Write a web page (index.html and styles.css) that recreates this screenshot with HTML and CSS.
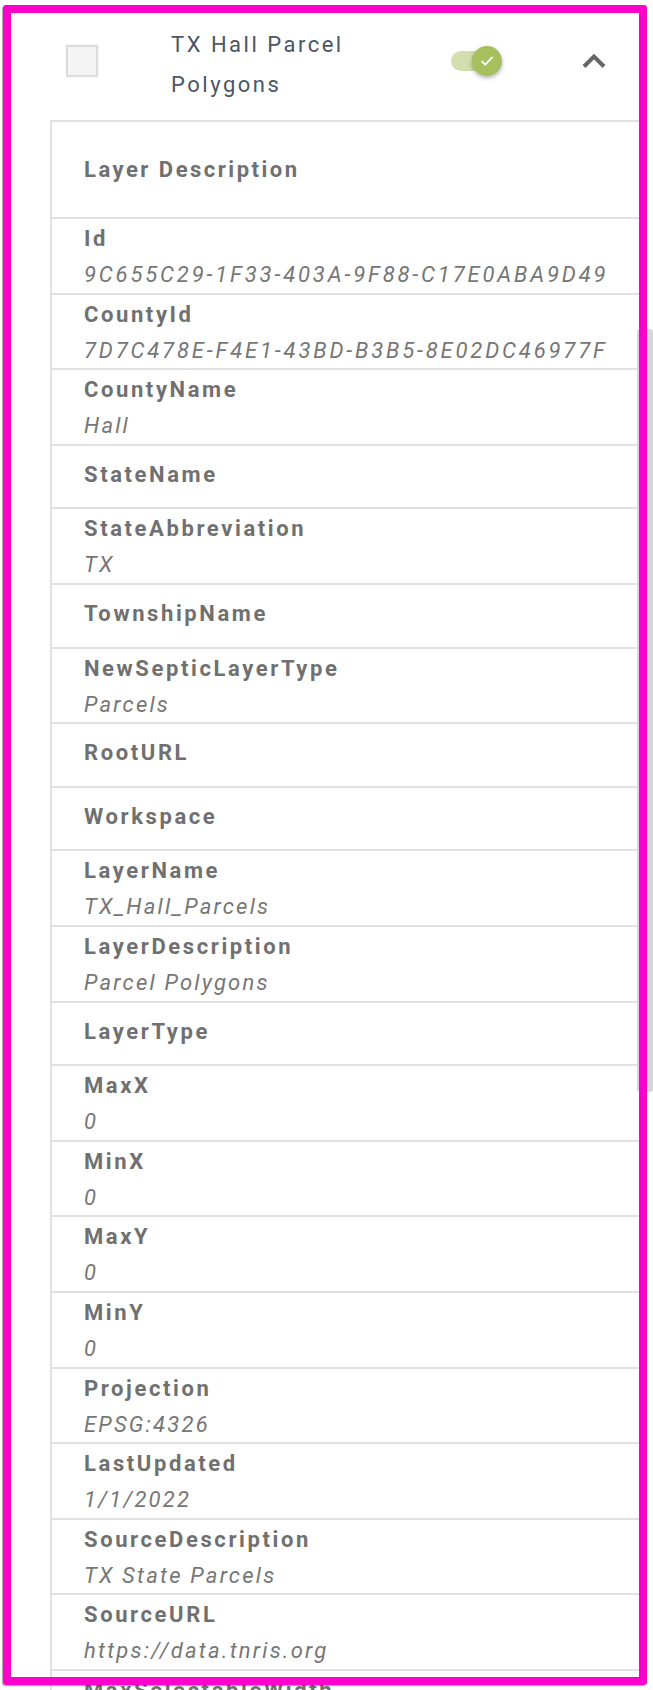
FILE: index.html
```html
<!DOCTYPE html>
<html lang="en">
<head>
	<meta charset="UTF-8">
	<meta name="viewport" content="width=device-width, initial-scale=1.0">
	<title>TX Hall Parcel Polygons</title>
	<link rel="stylesheet" href="styles.css">
</head>
<body>
	<div class="layer">
		<div class="layer-head">
			<span class="check"></span>
			<div class="layer-title">TX Hall Parcel Polygons</div>
			<div class="toggle">
				<span class="track"></span>
				<span class="knob">
					<svg width="14" height="12" viewBox="0 0 14 12"><path d="M2 6.5l3.3 3.2L12 2.5" fill="none" stroke="#fff" stroke-width="1.8" stroke-linecap="round" stroke-linejoin="round"/></svg>
				</span>
			</div>
			<svg class="chevron" width="24" height="16" viewBox="0 0 24 16"><path d="M2 13.5L12 3.5l10 10" fill="none" stroke="#666" stroke-width="4"/></svg>
		</div>
		<div class="props">
			<div class="props-head">Layer Description</div>
			<div class="prop"><div class="key">Id</div><div class="val code">9C655C29-1F33-403A-9F88-C17E0ABA9D49</div></div>
			<div class="prop"><div class="key">CountyId</div><div class="val code">7D7C478E-F4E1-43BD-B3B5-8E02DC46977F</div></div>
			<div class="prop"><div class="key">CountyName</div><div class="val">Hall</div></div>
			<div class="prop empty"><div class="key">StateName</div></div>
			<div class="prop"><div class="key">StateAbbreviation</div><div class="val">TX</div></div>
			<div class="prop empty"><div class="key">TownshipName</div></div>
			<div class="prop"><div class="key">NewSepticLayerType</div><div class="val">Parcels</div></div>
			<div class="prop empty"><div class="key">RootURL</div></div>
			<div class="prop empty"><div class="key">Workspace</div></div>
			<div class="prop"><div class="key">LayerName</div><div class="val">TX_Hall_Parcels</div></div>
			<div class="prop"><div class="key">LayerDescription</div><div class="val">Parcel Polygons</div></div>
			<div class="prop empty"><div class="key">LayerType</div></div>
			<div class="prop"><div class="key">MaxX</div><div class="val">0</div></div>
			<div class="prop"><div class="key">MinX</div><div class="val">0</div></div>
			<div class="prop"><div class="key">MaxY</div><div class="val">0</div></div>
			<div class="prop"><div class="key">MinY</div><div class="val">0</div></div>
			<div class="prop"><div class="key">Projection</div><div class="val">EPSG:4326</div></div>
			<div class="prop"><div class="key">LastUpdated</div><div class="val">1/1/2022</div></div>
			<div class="prop"><div class="key">SourceDescription</div><div class="val">TX State Parcels</div></div>
			<div class="prop"><div class="key">SourceURL</div><div class="val">https://data.tnris.org</div></div>
			<div class="prop"><div class="key">MaxSelectableWidth</div><div class="val">0</div></div>
		</div>
	</div>
	<div class="scroll-thumb"></div>
	<div class="frame"></div>
</body>
</html>
```

FILE: styles.css
```css
html, body {
	margin: 0;
	background: #fff;
}
body {
	font-family: Roboto, "Liberation Sans", sans-serif;
	height: 1690px;
	overflow: hidden;
}
.layer-head {
	display: flex;
	align-items: center;
	height: 114px;
	padding-top: 6px;
}
.check {
	width: 32px;
	height: 32px;
	margin-left: 66px;
	margin-top: -4px;
	box-sizing: border-box;
	background: #f4f4f4;
	border: 2px solid #dcdcdc;
	box-shadow: 0 0 1px #ccc;
}
.layer-title {
	flex: 0 0 240px;
	margin-left: 73px;
	padding-top: 4px;
	font-size: 22px;
	line-height: 40px;
	letter-spacing: 2.5px;
	color: #4b5567;
}
.toggle {
	display: flex;
	align-items: center;
	margin-left: 40px;
	margin-top: -4px;
}
.track {
	width: 40px;
	height: 20px;
	border-radius: 10px;
	background: #d3deaf;
}
.knob {
	display: flex;
	align-items: center;
	justify-content: center;
	width: 30px;
	height: 30px;
	margin-left: -19px;
	border-radius: 50%;
	background: #a8bf5e;
	box-shadow: 0 2px 4px rgba(0, 0, 0, 0.3);
}
.chevron {
	margin-left: 80px;
	margin-top: -4px;
}
.props {
	margin-left: 50px;
	width: 589px;
	border-top: 2px solid #e1e1e1;
	border-left: 2px solid #e1e1e1;
	color: #707070;
}
.props-head {
	display: flex;
	align-items: center;
	height: 95px;
	padding-left: 32px;
	border-bottom: 2px solid #e1e1e1;
	font-size: 22px;
	font-weight: bold;
	letter-spacing: 2.5px;
}
.prop {
	padding: 2px 0 0 32px;
	border-bottom: 2px solid #e1e1e1;
}
.prop.empty {
	padding: 11px 0 14.6px 32px;
}
.key {
	font-size: 22px;
	line-height: 36px;
	font-weight: bold;
	letter-spacing: 2.6px;
}
.val {
	font-size: 22px;
	line-height: 35.6px;
	font-style: italic;
	letter-spacing: 2.2px;
	color: #767676;
}
.val.code {
	letter-spacing: 2.85px;
}
.scroll-thumb {
	position: fixed;
	left: 637px;
	top: 329px;
	width: 16px;
	height: 763px;
	border-radius: 3px;
	background: #d6d6d6;
}
.frame {
	position: fixed;
	left: 3px;
	top: 5px;
	width: 644px;
	height: 1680px;
	box-sizing: border-box;
	border: 8px solid #ff00cc;
	border-radius: 3px;
	box-shadow: -1px 1px 1px rgba(0, 0, 0, 0.35);
	pointer-events: none;
}
```
